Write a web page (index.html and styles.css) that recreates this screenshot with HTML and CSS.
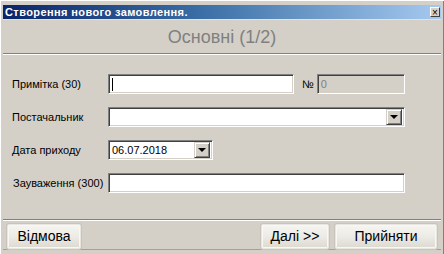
FILE: index.html
```html
<!DOCTYPE html>
<html lang="uk">
<head>
    <meta charset="UTF-8">
    <title>Створення нового замовлення.</title>
    <link rel="stylesheet" href="styles.css">
</head>
<body>

    <div class="window">
        <div class="titlebar">
            <span class="title">Створення нового замовлення.</span>
            <span class="close">&#215;</span>
        </div>

        <div class="header">Основні (1/2)</div>

        <div class="form">
            <label>Примітка (30)</label>
            <div class="row">
                <div class="field note"><span class="caret"></span></div>
                <span class="num">№</span>
                <div class="field disabled">0</div>
            </div>

            <label>Постачальник</label>
            <div class="field combo wide">
                <span class="value"></span>
                <span class="drop"><span class="arrow"></span></span>
            </div>

            <label>Дата приходу</label>
            <div class="field combo date">
                <span class="value">06.07.2018</span>
                <span class="drop"><span class="arrow"></span></span>
            </div>

            <label class="indent">Зауваження (300)</label>
            <div class="field wide"></div>
        </div>

        <div class="footer">
            <button>Відмова</button>
            <button class="next">Далі &gt;&gt;</button>
            <button class="accept">Прийняти</button>
        </div>
    </div>

</body>
</html>
```

FILE: styles.css
```css
body {
    margin: 0;
    background: #d4d0c8;
    font-family: "Liberation Sans", Arial, sans-serif;
    font-size: 11px;
    color: #000;
}
.window {
    width: 444px;
    height: 254px;
    box-sizing: border-box;
    padding: 5px 3px 0 3px;
    background: #d4d0c8;
    box-shadow: inset 1px 1px 0 #fff, inset -1px 0 0 #808080;
}
.titlebar {
    height: 14px;
    display: flex;
    align-items: center;
    justify-content: space-between;
    padding: 0 1px 0 2px;
    background: linear-gradient(to right, #0a246a 0%, #3a6ea5 45%, #a6caf0 100%);
}
.title {
    color: #fff;
    font-weight: bold;
    font-size: 11px;
    letter-spacing: 0.4px;
}
.close {
    width: 10px;
    height: 10px;
    line-height: 9px;
    text-align: center;
    font-size: 10px;
    background: #d4d0c8;
    border: 1px solid;
    border-color: #fff #404040 #404040 #fff;
    box-sizing: border-box;
    color: #000;
}
.header {
    height: 33px;
    line-height: 35px;
    text-align: center;
    font-size: 18px;
    color: #808080;
    border-top: 1px solid #e4e2dc;
    border-bottom: 1px solid #808080;
    box-shadow: 0 1px 0 #fff;
}
.form {
    display: grid;
    grid-template-columns: 96px auto;
    row-gap: 13px;
    padding: 20px 0 26px 9px;
    align-items: center;
    justify-items: start;
}
.form label.indent {
    padding-left: 1px;
}
.row {
    display: flex;
    align-items: center;
}
.field {
    height: 20px;
    box-sizing: border-box;
    background: #fff;
    border: 1px solid;
    border-color: #808080 #fff #fff #808080;
    box-shadow: inset 1px 1px 0 #404040, inset -1px -1px 0 #d4d0c8;
    padding: 0 3px;
    line-height: 18px;
}
.note {
    width: 186px;
    display: flex;
    align-items: center;
}
.caret {
    width: 1px;
    height: 13px;
    background: #000;
}
.num {
    margin: 0 3px 0 8px;
    font-size: 11px;
}
.disabled {
    width: 88px;
    background: #d4d0c8;
    color: #808080;
}
.wide {
    width: 297px;
}
.date {
    width: 105px;
}
.combo {
    display: flex;
    align-items: center;
    justify-content: space-between;
    padding-right: 2px;
}
.drop {
    width: 16px;
    height: 16px;
    box-sizing: border-box;
    background: #d4d0c8;
    border: 1px solid;
    border-color: #d4d0c8 #404040 #404040 #d4d0c8;
    box-shadow: inset 1px 1px 0 #fff, inset -1px -1px 0 #808080;
    display: flex;
    align-items: center;
    justify-content: center;
}
.arrow {
    width: 0;
    height: 0;
    border-left: 4px solid transparent;
    border-right: 4px solid transparent;
    border-top: 4px solid #000;
}
.footer {
    display: flex;
    align-items: center;
    padding: 3px 4px 0 4px;
    height: 31px;
    box-sizing: border-box;
    border-top: 1px solid #808080;
    box-shadow: inset 0 1px 0 #fff;
    border-bottom: 1px solid #a0a0a0;
}
button {
    height: 25px;
    width: 74px;
    font-family: "Liberation Sans", Arial, sans-serif;
    font-size: 14px;
    color: #000;
    background: linear-gradient(to bottom, #f6f5f1 0%, #ecebe5 50%, #dcd9d0 100%);
    border: 1px solid #e8e6e0;
    border-radius: 2px;
    box-shadow: inset 0 0 0 1px #f8f7f3, 0 0 0 1px #c8c4bc;
    padding: 0;
}
.next {
    width: 68px;
    margin-left: auto;
    margin-right: 6px;
}
.accept {
    width: 102px;
}
```
